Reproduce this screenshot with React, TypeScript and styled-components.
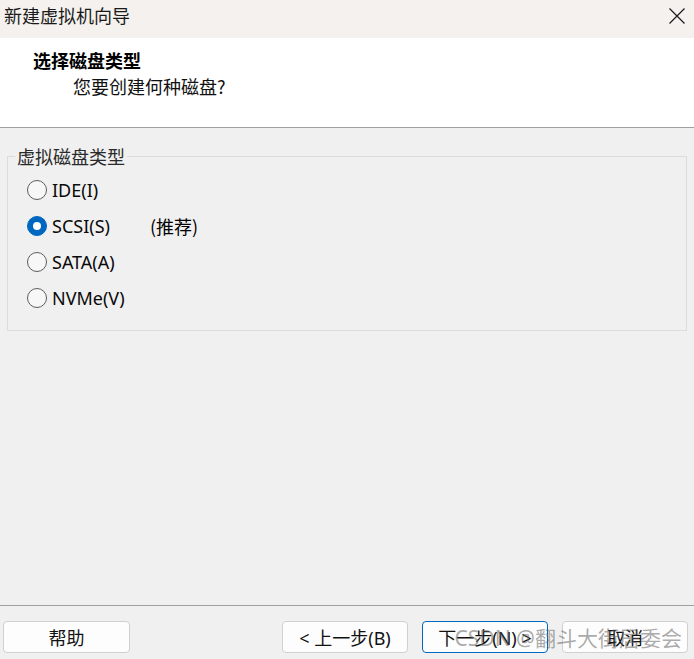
import React, { useState } from 'react';
import styled, { createGlobalStyle } from 'styled-components';

const GlobalStyle = createGlobalStyle`
  html, body, #root {
    margin: 0;
    padding: 0;
    height: 100%;
  }
  body {
    font-family: "Noto Sans", "Noto Sans CJK SC", sans-serif;
    background: #f0f0f0;
    color: #000;
    overflow: hidden;
  }
`;

const Window = styled.div`
  display: flex;
  flex-direction: column;
  height: 100vh;
  background: #f0f0f0;
`;

const TitleBar = styled.div`
  display: flex;
  justify-content: space-between;
  align-items: flex-start;
  height: 38px;
  padding: 4px 9px 0 4px;
  box-sizing: border-box;
  background: #f4f1ee;
`;

const TitleText = styled.span`
  font-family: "Noto Sans CJK SC", sans-serif;
  font-size: 18px;
  line-height: 22px;
  color: #1a1a1a;
`;

const CloseButton = styled.button`
  border: none;
  background: transparent;
  padding: 0;
  margin-top: 4px;
  width: 16px;
  height: 16px;
  cursor: pointer;
  display: flex;
`;

const Header = styled.div`
  height: 89px;
  box-sizing: border-box;
  background: #fff;
  padding: 10px 0 0 33px;
`;

const HeaderTitle = styled.div`
  font-family: "Noto Sans CJK SC", sans-serif;
  font-weight: 700;
  font-size: 18px;
  line-height: 24px;
`;

const HeaderSub = styled.div`
  font-family: "Noto Sans CJK SC", sans-serif;
  font-size: 18px;
  line-height: 24px;
  margin: 2px 0 0 40px;
  color: #111;
`;

const Divider = styled.div`
  height: 1px;
  background: #a0a0a0;
`;

const Content = styled.div`
  flex: 1;
  padding-top: 19px;
`;

const GroupBox = styled.fieldset`
  margin: 0 7px;
  padding: 0;
  border: 1px solid #dcdcdc;
  min-width: 0;
`;

const GroupLegend = styled.legend`
  margin-left: 7px;
  padding: 0 2px;
  font-family: "Noto Sans CJK SC", sans-serif;
  font-size: 18px;
  line-height: 18px;
  color: #2a2a2a;
`;

const OptionList = styled.div`
  display: flex;
  flex-direction: column;
  padding: 7px 0 14px 19px;
`;

const OptionRow = styled.label`
  display: flex;
  align-items: center;
  height: 36px;
  cursor: pointer;
`;

const RadioCircle = styled.span<{ $checked: boolean }>`
  width: 20px;
  height: 20px;
  box-sizing: border-box;
  border-radius: 50%;
  border: 1px solid ${p => (p.$checked ? '#0067c0' : '#5c5c5c')};
  background: ${p => (p.$checked ? '#0067c0' : '#f7f7f7')};
  display: flex;
  align-items: center;
  justify-content: center;

  &::after {
    content: '';
    display: ${p => (p.$checked ? 'block' : 'none')};
    width: 8px;
    height: 8px;
    border-radius: 50%;
    background: #fff;
  }
`;

const OptionText = styled.span`
  width: 98px;
  margin-left: 5px;
  font-size: 18px;
  line-height: 24px;
  color: #0a0a0a;
`;

const OptionNote = styled.span`
  font-family: "Noto Sans CJK SC", sans-serif;
  font-size: 18px;
  line-height: 24px;
`;

const Footer = styled.div`
  position: relative;
  display: flex;
  justify-content: space-between;
  border-top: 1px solid #a0a0a0;
  padding: 15px 6px 6px 3px;
`;

const NavGroup = styled.div`
  display: flex;
  gap: 14px;
`;

const DialogButton = styled.button<{ $primary?: boolean; $wide?: boolean }>`
  width: ${p => (p.$wide ? '127px' : '126px')};
  height: 32px;
  box-sizing: border-box;
  border-radius: 4px;
  border: 1px solid ${p => (p.$primary ? '#0067c0' : '#d0d0d0')};
  background: #fdfdfd;
  font-family: "Noto Sans", "Noto Sans CJK SC", sans-serif;
  font-size: 18px;
  color: #111;
  padding: 0;
  cursor: pointer;
`;

const Watermark = styled.span`
  position: absolute;
  right: 12px;
  top: 17px;
  font-family: "Noto Sans", "Noto Sans CJK SC", sans-serif;
  font-size: 21px;
  line-height: 30px;
  color: rgba(100, 100, 100, 0.55);
  pointer-events: none;
  white-space: nowrap;
`;

const options = [
  { id: 'ide', label: 'IDE(I)' },
  { id: 'scsi', label: 'SCSI(S)', note: '(推荐)' },
  { id: 'sata', label: 'SATA(A)' },
  { id: 'nvme', label: 'NVMe(V)' },
];

const App: React.FC = () => {
  const [selected, setSelected] = useState('scsi');

  return (
    <Window>
      <GlobalStyle />
      <TitleBar>
        <TitleText>新建虚拟机向导</TitleText>
        <CloseButton aria-label="关闭">
          <svg width="16" height="16" viewBox="0 0 16 16">
            <path d="M0.5 0.5 L15.5 15.5 M15.5 0.5 L0.5 15.5" stroke="#1a1a1a" strokeWidth="1.2" fill="none" />
          </svg>
        </CloseButton>
      </TitleBar>

      <Header>
        <HeaderTitle>选择磁盘类型</HeaderTitle>
        <HeaderSub>您要创建何种磁盘?</HeaderSub>
      </Header>
      <Divider />

      <Content>
        <GroupBox>
          <GroupLegend>虚拟磁盘类型</GroupLegend>
          <OptionList>
            {options.map(opt => (
              <OptionRow key={opt.id} onClick={() => setSelected(opt.id)}>
                <RadioCircle $checked={selected === opt.id} />
                <OptionText>{opt.label}</OptionText>
                {opt.note && <OptionNote>{opt.note}</OptionNote>}
              </OptionRow>
            ))}
          </OptionList>
        </GroupBox>
      </Content>

      <Footer>
        <DialogButton $wide>帮助</DialogButton>
        <NavGroup>
          <DialogButton>&lt; 上一步(B)</DialogButton>
          <DialogButton $primary>下一步(N) &gt;</DialogButton>
          <DialogButton>取消</DialogButton>
        </NavGroup>
        <Watermark>CSDN @翻斗大街居委会</Watermark>
      </Footer>
    </Window>
  );
};

export default App;
